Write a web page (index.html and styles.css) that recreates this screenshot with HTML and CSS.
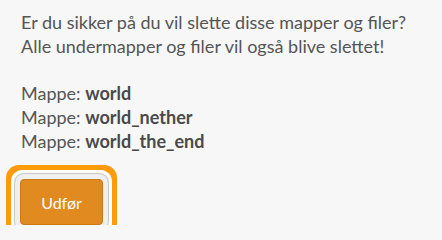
FILE: index.html
```
<!DOCTYPE html>
<html>
<head>
<meta charset="utf-8">
<link rel="stylesheet" href="styles.css">
</head>
<body>
<div class="page">
  <p class="msg">Er du sikker på du vil slette disse mapper og filer?<br>Alle undermapper og filer vil også blive slettet!</p>
  <ul class="list">
    <li>Mappe: <b>world</b></li>
    <li>Mappe: <b>world_nether</b></li>
    <li>Mappe: <b>world_the_end</b></li>
  </ul>
  <div class="actions">
    <button class="btn">Udfør</button>
  </div>
</div>
</body>
</html>
```
FILE: styles.css
```
html, body {
  margin: 0;
  padding: 0;
  background: #f7f7f7;
}
.page {
  padding: 10px 21px 0;
  font-family: Lato, "Open Sans", sans-serif;
  font-size: 18px;
  line-height: 24px;
  color: #555;
}
.msg {
  margin: 0 0 23px;
}
.list {
  list-style: none;
  margin: 0;
  padding: 0;
}
.list b {
  font-weight: 700;
  color: #4a4a4a;
}
.actions {
  padding-top: 26px;
}
.btn {
  display: block;
  margin-left: -1px;
  width: 83px;
  height: 46px;
  border: 1px solid #c97a17;
  border-radius: 4px;
  background: #e08a1f;
  color: #fff;
  font-family: Lato, sans-serif;
  font-size: 16px;
  box-shadow: 0 0 0 5px #efefef, 0 0 1px 6px #c4c4c4, 0 0 0 9px #fff, 0 0 0 14px #ff9a0a;
}
```
